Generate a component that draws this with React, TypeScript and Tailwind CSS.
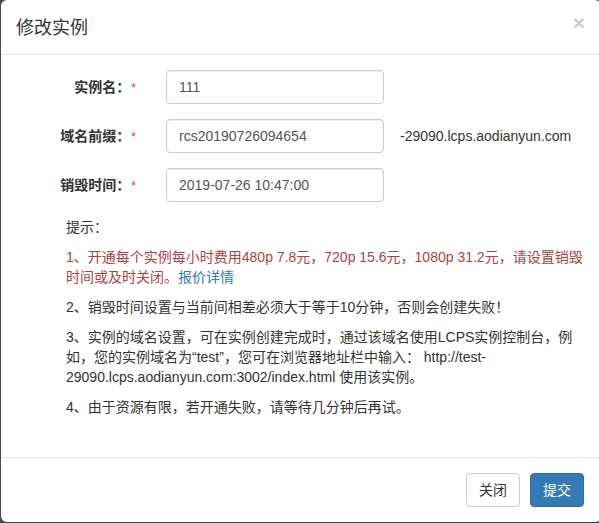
import React from "react";

const fieldRows = [
  { label: "实例名：", value: "111", suffix: "" },
  { label: "域名前缀：", value: "rcs20190726094654", suffix: "-29090.lcps.aodianyun.com" },
  { label: "销毁时间：", value: "2019-07-26 10:47:00", suffix: "" },
];

function FormRow({ label, value, suffix }) {
  return (
    <div className="flex items-center h-[34px] mb-[15px]">
      <div className="w-[135px] text-right font-bold text-[14px] text-[#333]">
        {label}
        <span className="text-[#e4393c] font-normal text-[12px] ml-[1px]">*</span>
      </div>
      <input
        className="ml-[30px] w-[218px] h-[34px] px-[12px] border border-[#ccc] rounded-[4px] text-[14px] text-[#555] bg-white shadow-[inset_0_1px_1px_rgba(0,0,0,0.075)] outline-none"
        defaultValue={value}
      />
      {suffix && <span className="ml-[16px] text-[14px] text-[#333]">{suffix}</span>}
    </div>
  );
}

export default function App() {
  return (
    <div className="w-[599px] h-[523px] bg-[#4a4a4a] pl-px pb-px overflow-hidden [font-family:'Liberation_Sans','Noto_Sans_CJK_SC',sans-serif]">
      <div className="w-[600px] h-[522px] bg-white rounded-[6px] flex flex-col">
        {/* header */}
        <div className="h-[55px] border-b border-[#e5e5e5] px-[15px] flex items-center justify-between">
          <h4 className="text-[18px] text-[#333] leading-[26px] mt-[1px]">修改实例</h4>
          <button className="text-[21px] font-bold text-black opacity-20 leading-none mr-[1px] mt-[-10px]">×</button>
        </div>

        {/* body */}
        <div className="flex-1 pt-[15px]">
          {fieldRows.map((row, i) => (
            <FormRow key={i} label={row.label} value={row.value} suffix={row.suffix} />
          ))}
          <div className="pl-[65px] text-[14px] leading-[20px] text-[#333] whitespace-nowrap">
            <p className="mb-[10px]">提示：</p>
            <p className="mb-[10px] text-[#a94442]">
              1、开通每个实例每小时费用480p 7.8元，720p 15.6元，1080p 31.2元，请设置销毁
              <br />
              时间或及时关闭。<a className="text-[#337ab7]">报价详情</a>
            </p>
            <p className="mb-[10px]">2、销毁时间设置与当前间相差必须大于等于10分钟，否则会创建失败！</p>
            <p className="mb-[10px]">
              3、实例的域名设置，可在实例创建完成时，通过该域名使用LCPS实例控制台，例
              <br />
              如，您的实例域名为“test”，您可在浏览器地址栏中输入： http://test-
              <br />
              29090.lcps.aodianyun.com:3002/index.html 使用该实例。
            </p>
            <p className="mb-[10px]">4、由于资源有限，若开通失败，请等待几分钟后再试。</p>
          </div>
        </div>

        {/* footer */}
        <div className="h-[65px] border-t border-[#e5e5e5] flex items-center justify-end gap-[10px] pr-[17px]">
          <button className="w-[54px] h-[34px] rounded-[4px] border border-[#ccc] bg-white text-[14px] text-[#333]">
            关闭
          </button>
          <button className="w-[54px] h-[34px] rounded-[4px] border border-[#2e6da4] bg-[#337ab7] text-[14px] text-white">
            提交
          </button>
        </div>
      </div>
    </div>
  );
}
